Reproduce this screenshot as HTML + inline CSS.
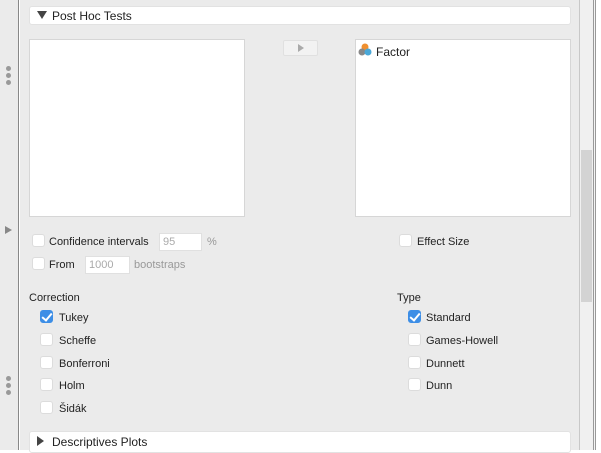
<!DOCTYPE html>
<html><head><style>
*{margin:0;padding:0;box-sizing:border-box}
body{width:601px;height:450px;overflow:hidden;background:#fff;font-family:"Liberation Sans",sans-serif;font-size:11px;color:#222;position:relative}
.a{position:absolute}
.cb{position:absolute;width:13px;height:13px;background:#fff;border:1px solid #dcdcdc;border-radius:3px}
.cb.on{background:#3d8ee6;border-color:#3d8ee6}
.cb.on::after{content:"";position:absolute;left:3px;top:0px;width:4px;height:8px;border:solid #fff;border-width:0 2px 2px 0;transform:rotate(40deg)}
.t{position:absolute;line-height:13px;white-space:nowrap;margin-top:1px}
.g{color:#999}
.in{position:absolute;background:#fff;border:1px solid #e0e0e0;color:#aaa;line-height:16px;padding-left:3px;height:18px;margin-top:1px}
.dot{position:absolute;left:6px;width:5px;height:5px;border-radius:50%;background:#999}
</style></head><body>
<div class="a" style="left:0;top:0;width:19px;height:450px;background:#ebebeb;border-right:1px solid #888"></div>
<div class="dot" style="top:66px"></div><div class="dot" style="top:73px"></div><div class="dot" style="top:80px"></div>
<div class="dot" style="top:376px"></div><div class="dot" style="top:383px"></div><div class="dot" style="top:390px"></div>
<div class="a" style="left:5px;top:226px;width:0;height:0;border-left:7px solid #888;border-top:4px solid transparent;border-bottom:4px solid transparent"></div>
<div class="a" style="left:20px;top:0;width:560px;height:450px;background:#ebebeb;border-right:1px solid #c8c8c8"></div>
<div class="a" style="left:580px;top:0;width:13px;height:450px;background:#f0f0f0"></div>
<div class="a" style="left:581px;top:150px;width:11px;height:152px;background:#d3d3d3"></div>
<div class="a" style="left:593px;top:0;width:3px;height:450px;border-left:1px solid #999;border-right:1px solid #999;background:#f4f4f4"></div>
<div class="a" style="left:29px;top:6px;width:542px;height:19px;background:#fff;border:1px solid #e2e2e2;border-radius:3px"></div>
<div class="a" style="left:37px;top:11px;width:0;height:0;border-top:8px solid #444;border-left:5px solid transparent;border-right:5px solid transparent"></div>
<div class="t" style="left:52px;top:9px;font-size:12px">Post Hoc Tests</div>
<div class="a" style="left:29px;top:39px;width:216px;height:178px;background:#fff;border:1px solid #d6d6d6"></div>
<div class="a" style="left:283px;top:40px;width:35px;height:16px;background:#f2f2f2;border:1px solid #e0e0e0;border-radius:2px"></div>
<div class="a" style="left:298px;top:44px;width:0;height:0;border-left:6px solid #aaa;border-top:4px solid transparent;border-bottom:4px solid transparent"></div>
<div class="a" style="left:355px;top:39px;width:216px;height:178px;background:#fff;border:1px solid #d6d6d6"></div>
<svg class="a" style="left:358px;top:43px" width="15" height="14"><circle cx="7" cy="4" r="3.5" fill="#f09030"/><circle cx="4" cy="9" r="3.5" fill="#888"/><circle cx="10" cy="9" r="3.5" fill="#4aa8d8"/></svg>
<div class="t" style="left:376px;top:45px;font-size:12px">Factor</div>
<div class="cb" style="left:32px;top:234px"></div><div class="t" style="left:49px;top:235px">Confidence intervals</div>
<div class="in" style="left:159px;top:232px;width:43px">95</div><div class="t g" style="left:207px;top:235px">%</div>
<div class="cb" style="left:32px;top:257px"></div><div class="t" style="left:49px;top:258px">From</div>
<div class="in" style="left:85px;top:255px;width:45px">1000</div><div class="t g" style="left:134px;top:258px">bootstraps</div>
<div class="cb" style="left:399px;top:234px"></div><div class="t" style="left:417px;top:235px">Effect Size</div>
<div class="t" style="left:29px;top:291px">Correction</div>
<div class="cb on" style="left:40px;top:310px"></div><div class="t" style="left:59px;top:311px">Tukey</div>
<div class="cb" style="left:40px;top:333px"></div><div class="t" style="left:59px;top:334px">Scheffe</div>
<div class="cb" style="left:40px;top:356px"></div><div class="t" style="left:59px;top:357px">Bonferroni</div>
<div class="cb" style="left:40px;top:378px"></div><div class="t" style="left:59px;top:379px">Holm</div>
<div class="cb" style="left:40px;top:401px"></div><div class="t" style="left:59px;top:402px">Šidák</div>
<div class="t" style="left:397px;top:291px">Type</div>
<div class="cb on" style="left:408px;top:310px"></div><div class="t" style="left:426px;top:311px">Standard</div>
<div class="cb" style="left:408px;top:333px"></div><div class="t" style="left:426px;top:334px">Games-Howell</div>
<div class="cb" style="left:408px;top:356px"></div><div class="t" style="left:426px;top:357px">Dunnett</div>
<div class="cb" style="left:408px;top:378px"></div><div class="t" style="left:426px;top:379px">Dunn</div>
<div class="a" style="left:29px;top:431px;width:542px;height:22px;background:#fff;border:1px solid #e2e2e2;border-radius:3px"></div>
<div class="a" style="left:37px;top:436px;width:0;height:0;border-left:7px solid #444;border-top:5px solid transparent;border-bottom:5px solid transparent"></div>
<div class="t" style="left:52px;top:435px;font-size:12px">Descriptives Plots</div>
</body></html>
